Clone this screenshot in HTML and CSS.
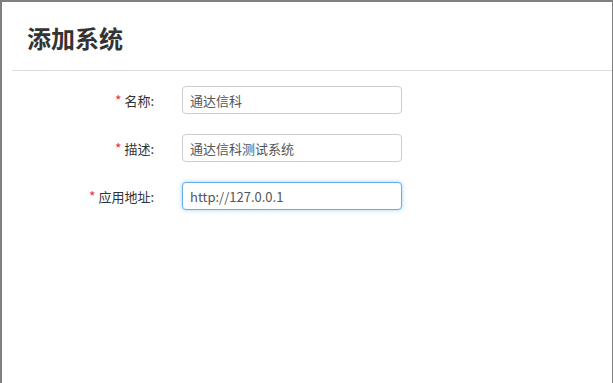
FILE: index.html
```html
<!DOCTYPE html>
<html lang="zh-CN">
<head>
<meta charset="utf-8">
<title>添加系统</title>
<link rel="stylesheet" href="styles.css">
</head>
<body>
<div class="frame">
  <div class="header">
    <h1 class="title">添加系统</h1>
  </div>
  <div class="divider"></div>
  <form class="form">
    <div class="row">
      <label class="label"><span class="req">*</span> 名称:</label>
      <input class="input" type="text" value="通达信科">
    </div>
    <div class="row">
      <label class="label"><span class="req">*</span> 描述:</label>
      <input class="input" type="text" value="通达信科测试系统">
    </div>
    <div class="row">
      <label class="label"><span class="req">*</span> 应用地址:</label>
      <input class="input focus" type="text" value="http://127.0.0.1">
    </div>
  </form>
</div>
</body>
</html>
```
FILE: styles.css
```css
html, body {
  margin: 0;
  padding: 0;
  background: #fff;
}
body {
  font-family: "Noto Sans CJK SC", "Noto Sans", sans-serif;
  color: #333;
}
.frame {
  width: 613px;
  height: 383px;
  box-sizing: border-box;
  border-top: 2px solid #808080;
  border-left: 2px solid #808080;
  border-right: 1px solid #808080;
  box-shadow: inset -1px 0 0 #fff;
  overflow: hidden;
}
.header {
  height: 68px;
  padding-left: 25px;
  display: flex;
  align-items: center;
}
.title {
  margin: 0;
  font-size: 24px;
  font-weight: bold;
  line-height: 24px;
  color: #333;
  padding-top: 3px;
}
.divider {
  height: 1px;
  background: #ddd;
  margin-left: 10px;
}
.form {
  padding-top: 15px;
  display: flex;
  flex-direction: column;
  gap: 20px;
}
.row {
  display: flex;
  align-items: center;
  height: 28px;
}
.label {
  width: 152px;
  text-align: right;
  font-size: 13px;
  color: #333;
  margin-right: 28px;
}
.req {
  color: #e33;
  font-size: 14px;
}
.input {
  width: 220px;
  height: 28px;
  box-sizing: border-box;
  border: 1px solid #ccc;
  border-radius: 4px;
  padding: 0 7px;
  font-family: "Noto Sans CJK SC", "Noto Sans", sans-serif;
  font-size: 13px;
  color: #555;
  outline: none;
  background: #fff;
}
.input.focus {
  border-color: #66afe9;
  box-shadow: 0 0 4px rgba(102, 175, 233, 0.6);
}
```
